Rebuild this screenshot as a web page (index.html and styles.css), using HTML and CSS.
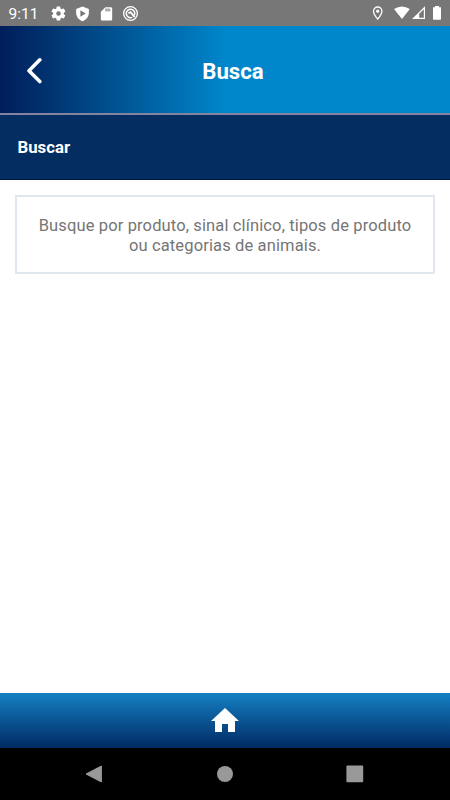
FILE: index.html
```html
<!DOCTYPE html>
<html lang="pt-BR">
<head>
<meta charset="utf-8">
<meta name="viewport" content="width=device-width, initial-scale=1">
<title>Busca</title>
<link rel="stylesheet" href="styles.css">
</head>
<body>
<div class="status">
  <span class="clock">9:11</span>
  <div class="status-left">
    <svg width="17" height="17" viewBox="0 0 24 24"><path fill="#fff" fill-rule="evenodd" d="M19.4 13c.1-.3.1-.7.1-1s0-.7-.1-1l2.1-1.600c.2-.2.3-.4.1-.7l-2-3.400c-.1-.2-.4-.3-.6-.2l-2.500 1c-.5-.4-1.100-.7-1.700-1l-.4-2.600c0-.3-.2-.5-.5-.5h-4c-.2 0-.4.2-.5.400L9 5.100c-.6.200-1.100.6-1.700 1l-2.500-1c-.2-.1-.5 0-.6.200l-2 3.400c-.1.200-.1.500.1.700L4.500 11c0 .3-.1.700-.1 1s0 .7.100 1l-2.200 1.600c-.2.200-.2.400-.1.700l2 3.400c.1.200.4.300.6.200l2.500-1c.5.4 1.100.7 1.700 1l.4 2.600c0 .2.200.4.500.4h4c.200 0 .4-.2.500-.4l.4-2.600c.6-.3 1.100-.6 1.700-1l2.500 1c.2.1.5 0 .6-.2l2-3.400c.1-.2.1-.5-.1-.7zM12 15.200a3.200 3.200 0 1 1 0-6.400 3.200 3.200 0 0 1 0 6.400z"/></svg>
    <svg width="17" height="17" viewBox="0 0 24 24"><path fill="#fff" fill-rule="evenodd" d="M12 2 3 5.500V11c0 5.500 3.800 10 9 12 5.200-2 9-6.500 9-12V5.500zM9 7.500v9l7.500-4.500z"/></svg>
    <svg width="17" height="17" viewBox="0 0 24 24"><path fill="#fff" d="M18 3h-7.500L4 9.500V20c0 1 .8 2 2 2h12c1.200 0 2-1 2-2V5c0-1.200-.8-2-2-2z"/><path fill="#aaa" d="M10 5h7.500v4H10z"/></svg>
    <svg width="17" height="17" viewBox="0 0 24 24" fill="none" stroke="#fff"><circle cx="12" cy="12" r="9.700" stroke-width="1.900"/><path stroke-width="2.200" d="M14.500 17.500A6 6 0 1 1 17.500 14.500"/><path stroke-width="2.600" d="m9 11.500 3-1.500 6 7"/></svg>
  </div>
  <svg class="status-right" width="70" height="18" viewBox="0 0 70 18">
    <path d="M5.700 15.200C4 13 1.500 10 1.500 7.200a4.200 4.200 0 0 1 8.400 0c0 2.800-2.500 5.800-4.200 8z" fill="none" stroke="#fff" stroke-width="1.300"/><circle cx="5.700" cy="7.200" r="1.600" fill="#fff"/>
    <path d="M22 5q7.900-5 15.800 0L30 15z" fill="#fff"/>
    <path d="M53 2.200V15H40z" fill="#fff"/><path d="M51.800 5.200v8.600h-4.600V9.800z" fill="#777"/>
    <path d="M63 2h4v1.300h2V15q0 .8-.8.800h-6.400Q61 15.800 61 15V3.300h2z" fill="#fff"/>
  </svg>
</div>
<header class="header">
  <svg class="back" width="20" height="28" viewBox="0 0 20 28"><path d="M14.800 3.800 4 14.800 14.800 25.600" fill="none" stroke="#fff" stroke-width="3.600" stroke-linecap="round" stroke-linejoin="round"/></svg>
  <h1>Busca</h1>
</header>
<div class="search">Buscar</div>
<main>
  <p class="hint">Busque por produto, sinal clínico, tipos de produto<br>ou categorias de animais.</p>
</main>
<footer class="home">
  <svg width="28" height="24" viewBox="0 0 28 24"><path d="M14 0 28 13h-4v11h-7v-8h-6v8H4V13H0z" fill="#fff"/></svg>
</footer>
<nav class="system">
  <svg viewBox="0 0 18 18"><path d="M16.400 1v16L1 9z" stroke="#999" stroke-linejoin="round" fill="#999"/></svg>
  <svg viewBox="0 0 18 18"><circle cx="9" cy="9" r="8"/></svg>
  <svg viewBox="0 0 18 18"><rect x=".4" y=".4" width="16.800" height="16.800" rx="1"/></svg>
</nav>
</body>
</html>
```
FILE: styles.css
```css
* { box-sizing: border-box; margin: 0; }
body {
  height: 800px;
  display: flex;
  flex-direction: column;
  background: #fff;
  font-family: Roboto, "Liberation Sans", sans-serif;
  overflow: hidden;
}
svg { display: block; flex: none; }
.status {
  height: 26px;
  flex: none;
  display: flex;
  align-items: center;
  padding: 0 0 0 8.500px;
  background: #777;
  color: #fff;
}
.clock { width: 41px; font-size: 15.500px; line-height: 26px; padding-top: 1px; }
.status-left { display: flex; gap: 7px; }
.status-right { margin-left: auto; margin-right: 8px; }
.header {
  height: 89px;
  flex: none;
  display: grid;
  grid-template-columns: 25px 1fr 25px;
  align-items: center;
  background: linear-gradient(90deg, #001e5c 0, #003471 50px, #005999 130px, #0086cb 225px);
  border-bottom: 2px solid #8584a0;
  color: #fff;
}
.back { justify-self: end; margin-right: -20px; }
h1 { font-size: 22.200px; line-height: 30px; text-align: center; font-weight: 700; padding-left: 16px; margin-top: 3px; }
.search {
  height: 65px;
  flex: none;
  padding-left: 17.500px;
  background: #042e62;
  border-bottom: 1px solid #001342;
  color: #fff;
  font-size: 16.800px;
  font-weight: 700;
  line-height: 64px;
}
main { flex: 1; padding: 15px 15px 0; }
.hint {
  height: 79px;
  border: 2px solid #e1e7ee;
  padding-top: 19px;
  color: #757575;
  font-size: 16.500px;
  letter-spacing: .13px;
  line-height: 20px;
  text-align: center;
  white-space: nowrap;
}
.home {
  height: 55px;
  flex: none;
  display: flex;
  justify-content: center;
  align-items: center;
  background: linear-gradient(#1580c4, #002a63);
}
.home svg { margin-top: -1px; }
.system {
  height: 52px;
  flex: none;
  display: flex;
  justify-content: space-between;
  align-items: center;
  padding: 0 86px 0 85px;
  background: #000;
}
.system svg { width: 18px; height: 18px; fill: #999; }
```
